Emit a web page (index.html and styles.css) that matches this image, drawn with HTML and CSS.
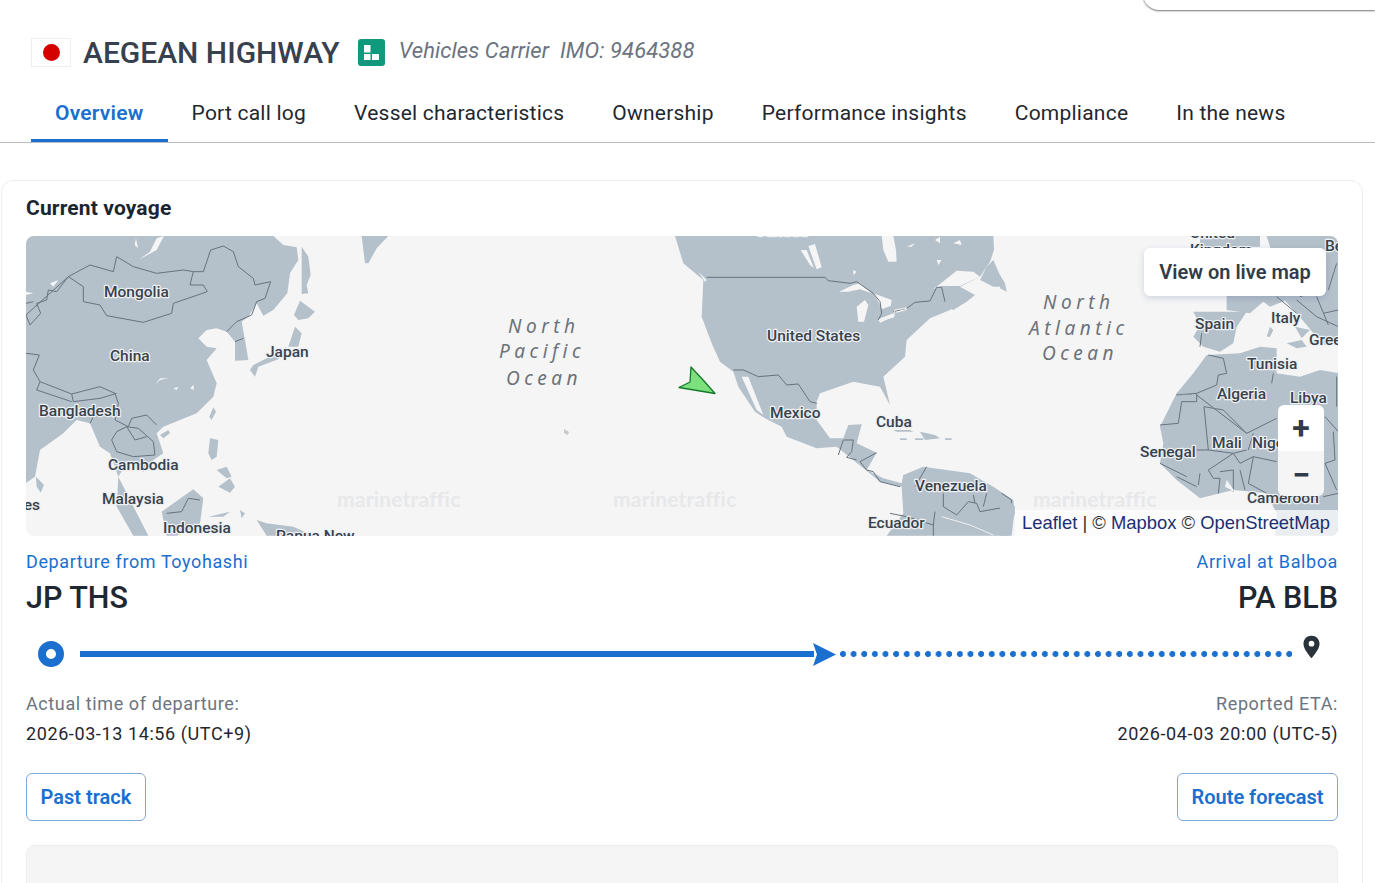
FILE: index.html
```html
<!DOCTYPE html>
<html lang="en">
<head>
<meta charset="utf-8">
<title>AEGEAN HIGHWAY</title>
<link rel="stylesheet" href="styles.css">
</head>
<body>
<div class="topmenu"></div>
<header class="head">
  <span class="flag"><span class="flag-dot"></span></span>
  <h1 class="name">AEGEAN HIGHWAY</h1>
  <svg class="type-icon" viewBox="0 0 27 27" width="27" height="27"><rect width="27" height="27" rx="3" fill="#0f9a7d"/><path fill="#fff" d="M6 6h6.500v7.500H6zM6 15h6.500v6H6zM14 15h7v6h-7z"/></svg>
  <span class="meta">Vehicles Carrier&nbsp; IMO: 9464388</span>
</header>
<nav class="tabs">
  <a class="tab active">Overview</a>
  <a class="tab">Port call log</a>
  <a class="tab">Vessel characteristics</a>
  <a class="tab">Ownership</a>
  <a class="tab">Performance insights</a>
  <a class="tab">Compliance</a>
  <a class="tab">In the news</a>
</nav>
<main class="card">
  <h2 class="card-title">Current voyage</h2>
  <div class="map">
    <svg class="map-svg" viewBox="26 236 1312 300" width="1312" height="300">
      <rect x="26" y="236" width="1312" height="300" fill="#f5f5f6"/>
      <g class="z2" transform="translate(0 170) scale(.33333)">
        <path class="land" d="M70 198H820L850 225L890 232L895 270L870 310L862 370L820 420L790 437L770 400L745 440L725 455L735 510L745 570L705 572L705 515L680 485L650 475L620 480L595 505L620 530L650 535L620 570L650 640L640 680L590 730L540 750L490 770L470 790L490 850L460 870L430 905L410 890L380 880L355 920L380 970L445 1097H400L350 1010L355 920L330 850L300 830L270 760L230 750L190 790L120 840L105 920L70 945Z"/>
        <path class="sea" d="M415 270L470 240L492 198L470 205L450 245ZM408 205L414 235L404 225ZM150 340L175 330L160 350ZM78 365L100 370L78 375ZM465 645L480 625L505 625L480 630ZM520 655L535 650L530 660ZM570 655L580 645L582 660Z"/>
        <path class="land" d="M1085 198H1165L1130 235L1105 280H1095ZM905 230L925 260L932 315L920 345L925 370L905 372L905 290ZM900 392L945 425L925 445L895 450L882 435ZM885 470L905 490L895 530L865 530ZM860 530L800 565L760 585L750 600L765 620L775 590L835 568ZM640 712L648 725L635 750L628 740ZM480 795L505 780L510 790L490 805ZM630 805L655 810L650 860L635 870L625 850ZM650 900L680 890L695 920L680 925ZM655 950L690 925L705 950L690 968ZM485 1025L580 958L610 985L600 1060L530 1097H500ZM625 1040L690 1025L670 1040ZM770 1050L800 1060L880 1070L940 1097H800ZM720 1020L735 1030L725 1045ZM108 920L132 945L122 968L110 950Z"/>
        <path class="border" d="M205 320L270 285L340 305L350 260L400 290L470 310L550 300L580 305L570 345L610 345L622 365L520 400L515 430L430 457L320 437L300 405L250 395L250 350L205 320ZM205 320L170 365L145 360L140 390L110 400L122 430L90 465L78 435ZM580 305L610 305L632 240L670 228L700 245L715 290L760 325L765 345L812 335L795 385L770 395L755 435L710 455L680 485M705 515L730 505M78 400L100 395M78 550L118 555L100 600L120 635L215 672L300 650L345 670L355 700L345 750L385 770L395 745L440 735L460 755L470 765M215 672L220 695L300 685L350 670M120 635L110 660L215 695M270 760L280 740L330 720M380 770L350 785L335 810L350 845L400 860L465 855L460 815L415 775ZM380 770L405 810L440 800M500 1030L545 1025L565 985L600 990"/>
      </g>
      <path class="isle" d="M564 429L569 432L568 435L564 433Z"/>
      <g class="z3" transform="translate(640 230) scale(.33333)">
        <path class="land" d="M105 18H1060L1062 60L1050 95L1020 140L960 170L1005 195L930 240L870 265L800 330L795 380L730 440L750 525L720 470L640 455L540 490L530 515L530 570L570 625L610 625L625 585L665 583L650 640L710 668L680 720L730 745L785 760L790 735L850 710L990 730L1060 770L1120 810L1125 850L1105 917H740L790 850L785 770L720 755L640 690L590 650L530 655L440 620L425 590L375 565L345 545L295 470L280 425L240 395L215 340L185 260L190 150L130 100Z"/>
        <path class="land" d="M1040 110L1060 90L1095 170L1060 170L1020 150Z"/>
        <path class="sea" d="M725 18H760L768 60L770 95H745L730 60ZM880 178L950 122L1000 125L1020 140L960 168L905 168ZM597 185L640 165L660 160L695 190L660 178L625 185ZM650 230L675 210L685 225L672 275H655ZM700 190L755 210L752 228L725 238L715 215ZM715 268L760 250L765 258L720 278ZM765 240L800 232V240L770 248ZM505 48L525 42L545 112L530 118ZM482 60L500 60L522 115L510 105ZM305 440L325 440L370 555L350 540ZM175 125L200 150L195 155ZM885 30L900 20L900 40ZM940 40L960 30L965 45ZM890 90L905 90L895 105ZM640 120L650 125L640 135ZM800 50L825 40L815 50Z"/>
        <path class="land" d="M840 605L885 615L900 625L855 630ZM780 625H800V630H780ZM825 625H850V630H825ZM915 625H935V630H915ZM760 600L810 600L820 605L770 605ZM930 235L960 210L1005 195L980 215L940 240Z"/>
        <path class="border" d="M200 142H555L565 152L630 160L650 155L700 190L720 215L725 250L715 270M760 245L800 235L825 217L870 213L890 172L905 172L915 215M280 420L310 420L355 440L415 435L440 465L475 462L510 515L530 520M640 630L610 630L595 675M640 630L635 665L620 682L650 690M710 668L660 695L680 720M680 720L700 725L720 755L780 770M860 710L825 770M910 790L910 830L950 855L985 815L1010 820L1020 845L1075 835L1110 835L1115 810L1085 790M1040 790L1030 830M1000 795L1005 820M885 845L880 885L880 917M750 850L800 860L880 885"/>
        <path class="river" d="M905 860L990 885L1060 915M715 272L760 262L765 240L800 235"/>
      </g>
      <g class="z4" transform="translate(1000 230) scale(.33333)">
        <path class="land" d="M0 135L15 160L20 185L0 175ZM0 790L45 830L35 917H0Z"/>
        <path class="land" d="M620 375L580 430L530 490L505 540L480 590L490 640L480 700L530 750L600 805L700 780L800 790L830 850L825 917H1020V430L960 420L900 440L830 430L830 355L780 350L720 370Z"/>
        <path class="land" d="M580 245H740L710 290L700 340L660 365L610 350L580 320L600 285Z"/>
        <path class="land" d="M680 180H860L855 212L810 230L790 215L750 250L680 240ZM800 18H1020V330L975 345L945 315L890 250L855 212L850 180ZM810 290L820 300L810 320H800ZM860 340L905 330L920 350L890 355ZM885 290L930 300L905 325ZM600 18H780V50H600Z"/>
        <path class="border" d="M625 375L670 385L680 430L655 435L650 465L590 490L530 495M590 490L590 515H545L535 580L480 585M590 495L740 610L830 565M612 530L625 660H590M612 530L670 540L740 610M760 610L745 660M820 430L815 460M625 660L700 670L740 660M700 670L720 700L760 680L830 695M700 670L625 720L640 745L660 745L655 790M660 725L700 720L700 785M720 720L735 780M600 730L595 765M480 700L560 740M530 740L590 770M760 680L745 760L800 790M975 560L1015 605M1000 605L1005 690L975 700L1010 780M970 800L1015 790M605 310L600 350M830 200L890 250M890 210L950 260L1015 290M950 200L985 285M970 250L1015 240M1010 100L985 180M900 200L960 180M1010 440V530"/>
        <path class="sea" d="M680 750L705 785L675 770Z"/>
        <path class="dash" d="M528 493H580"/>
      </g>
      <path class="ship" d="M691 367L704 381L715 393.500L679 387.500L690 382Z"/>
      <g class="water">
        <text x="508" y="333">North</text><text x="499" y="358">Pacific</text><text x="506" y="385">Ocean</text>
        <text x="1043" y="309">North</text><text x="1029" y="335">Atlantic</text><text x="1042" y="360">Ocean</text>
      </g>
      <g class="marks"><text x="337" y="507">marinetraffic</text><text x="613" y="507">marinetraffic</text><text x="1033" y="507">marinetraffic</text></g>
      <g class="labels">
        <text x="104" y="297">Mongolia</text><text x="110" y="361">China</text><text x="266" y="357">Japan</text><text x="39" y="416">Bangladesh</text><text x="108" y="470">Cambodia</text><text x="102" y="504">Malaysia</text><text x="163" y="533">Indonesia</text><text x="276" y="541">Papua New</text><text class="end" x="40" y="510">Maldives</text>
        <text x="767" y="341">United States</text><text x="770" y="418">Mexico</text><text x="876" y="427">Cuba</text><text x="915" y="491">Venezuela</text><text x="868" y="528">Ecuador</text><text x="755" y="236">Canada</text>
        <text x="1195" y="329">Spain</text><text x="1271" y="323">Italy</text><text x="1309" y="345">Greece</text><text x="1247" y="369">Tunisia</text><text x="1217" y="399">Algeria</text><text x="1290" y="403">Libya</text><text x="1212" y="448">Mali</text><text x="1252" y="448">Niger</text><text x="1140" y="457">Senegal</text><text x="1247" y="503">Cameroon</text><text x="1325" y="251">Belarus</text><text x="1190" y="238">United</text><text x="1190" y="255">Kingdom</text>
      </g>
    </svg>
    <a class="live-btn">View on live map</a>
    <div class="zoom-box"><span class="zoom-in">+</span><span class="zoom-out">−</span></div>
    <div class="attrib"><a>Leaflet</a> | © <a>Mapbox</a> © <a>OpenStreetMap</a></div>
  </div>
  <div class="ports">
    <div><div class="port-label">Departure from Toyohashi</div><div class="port-code">JP THS</div></div>
    <div class="right"><div class="port-label">Arrival at Balboa</div><div class="port-code">PA BLB</div></div>
  </div>
  <div class="timeline">
    <span class="origin"></span>
    <span class="solid"></span>
    <svg class="arrow" viewBox="0 0 23 23" width="23" height="23"><path d="M0 0L23 11.500L0 23L4 11.500Z"/></svg>
    <span class="dots"></span>
    <svg class="pin" viewBox="0 0 18 24" width="17" height="24"><path fill-rule="evenodd" d="M9 0C4 0 .5 3.700.5 8.500C.5 14 6 20 9 24C12 20 17.500 14 17.500 8.500C17.500 3.700 14 0 9 0ZM9 5.500A3 3 0 1 1 9 11.500A3 3 0 1 1 9 5.500Z"/></svg>
  </div>
  <div class="times">
    <div><div class="time-label">Actual time of departure:</div><div class="time-val">2026-03-13 14:56 (UTC+9)</div></div>
    <div class="right"><div class="time-label">Reported ETA:</div><div class="time-val">2026-04-03 20:00 (UTC-5)</div></div>
  </div>
  <div class="actions"><a class="btn">Past track</a><a class="btn">Route forecast</a></div>
  <div class="panel"></div>
</main>
</body>
</html>
```
FILE: styles.css
```css
* { box-sizing: border-box; }
html, body { height: 883px; overflow: hidden; }
body { margin: 0; background: #fff; font-family: Roboto, "Liberation Sans", sans-serif; color: #1f2730; position: relative; }
.topmenu { position: absolute; right: 0; top: -30px; width: 232px; height: 40px; background: #fff; border-bottom-left-radius: 16px; box-shadow: 0 1px 2px rgba(0,0,0,.55); }
.head { display: flex; align-items: center; height: 38px; padding: 33px 0 0 31px; box-sizing: content-box; }
.flag { width: 40px; height: 29px; border: 1px solid #eee; display: flex; align-items: center; justify-content: center; margin-right: 12px; }
.flag-dot { width: 17px; height: 17px; border-radius: 50%; background: #d50000; }
.name { margin: 0 18px 0 0; font-size: 30px; font-weight: 500; color: #36404e; line-height: 38px; position: relative; top: 1px; }
.type-icon { margin-right: 14px; }
.meta { font-style: italic; font-size: 22px; letter-spacing: .07px; color: #6b7480; position: relative; top: -2px; }
.tabs { display: flex; height: 72px; padding-left: 31px; border-bottom: 1px solid #b9bcc0; }
.tab { display: flex; align-items: center; padding: 12px 24px 0; font-size: 21px; height: 71px; color: #1f2730; letter-spacing: .23px; }
.tab.active { color: #1a6fcf; font-weight: 600; border-bottom: 3px solid #1a6fcf; padding-top: 15px; }
.card { margin: 37px 12px 0 1px; height: 720px; overflow: hidden; border: 1px solid #ededed; border-radius: 12px; padding: 15px 24px 0; }
.card-title { margin: 0 0 15px; font-size: 21px; line-height: 25px; font-weight: 700; color: #1b2530; letter-spacing: .15px; }
.map { position: relative; width: 1312px; height: 300px; border-radius: 8px; overflow: hidden; }
.map-svg { display: block; }
.land { fill: #b4c0ca; }
.sea { fill: #f5f5f6; }
.isle { fill: #c4c9ce; }
.border { fill: none; stroke: #66727d; stroke-width: 3; stroke-linejoin: round; }
.river { fill: none; stroke: #eef0f2; stroke-width: 3; }
.dash { fill: none; stroke: #8b96a0; stroke-width: 3; stroke-dasharray: 12 6; }
.ship { fill: #7ce07c; stroke: #137a2c; stroke-width: 1.300; stroke-linejoin: round; }
.water text { font-family: "Noto Sans", Roboto, sans-serif; font-style: italic; font-size: 19px; letter-spacing: 4.500px; fill: #6b7279; }
.marks text { font-family: Lato, sans-serif; font-weight: 700; font-size: 21px; fill: #e7e8e9; letter-spacing: .2px; }
.labels text { font-family: Roboto, sans-serif; font-size: 15.500px; font-weight: 500; fill: #39424c; stroke: #eef1f4; stroke-width: 2.500; paint-order: stroke; stroke-linejoin: round; }
.labels .end { text-anchor: end; }
.live-btn { position: absolute; left: 1118px; top: 12px; width: 182px; height: 48px; display: flex; align-items: center; justify-content: center; background: #fff; border-radius: 6px; font-size: 20px; font-weight: 600; color: #323c48; box-shadow: 0 2px 6px rgba(40,60,120,.18); }
.zoom-box { position: absolute; left: 1252px; top: 169px; width: 46px; height: 91px; display: flex; flex-direction: column; border-radius: 6px; overflow: hidden; }
.zoom-in, .zoom-out { height: 45.500px; display: flex; align-items: center; justify-content: center; font-size: 32px; font-weight: 700; color: #323c48; line-height: 1; }
.zoom-in { background: #fff; }
.zoom-out { background: #f5f5f6; padding-top: 4px; }
.attrib { position: absolute; right: 0; bottom: 0; height: 26px; line-height: 26px; padding: 0 8px 0 7px; white-space: pre; background: rgba(255,255,255,.72); font-family: "Liberation Sans", sans-serif; font-size: 18.400px; color: #333; }
.attrib a { color: #1c2f73; }
.ports, .times, .actions { display: flex; justify-content: space-between; }
.ports { margin-top: 13px; }
.right { text-align: right; }
.port-label { font-size: 18px; line-height: 26px; color: #1a6fcf; letter-spacing: .6px; }
.port-code { font-size: 30.500px; font-weight: 500; line-height: 46px; color: #1f2730; }
.timeline { display: flex; align-items: center; height: 38px; padding-left: 12px; margin-top: 14px; }
.origin { width: 26px; height: 26px; border-radius: 50%; border: 8px solid #1a6fcf; background: #fff; margin-right: 16px; flex: none; }
.solid { width: 734px; height: 6px; background: #1a6fcf; flex: none; }
.arrow { fill: #1a6fcf; margin-left: -1px; flex: none; }
.dots { width: 452px; height: 6px; margin-left: 4px; flex: none; background: radial-gradient(circle at 3px 3px, #1a6fcf 2.700px, transparent 3.200px) 0 0 / 10.630px 6px repeat-x; }
.pin { fill: #2a323b; margin: -14px 0 0 11px; flex: none; }
.times { margin-top: 16px; }
.time-label { font-size: 18px; line-height: 30px; color: #6b7480; letter-spacing: .6px; }
.time-val { font-size: 18px; line-height: 30px; color: #1f2730; letter-spacing: .6px; }
.actions { margin-top: 24px; }
.btn { display: flex; align-items: center; height: 48px; padding: 0 13.500px; border: 1px solid #7ea9d9; border-radius: 6px; color: #1a6fcf; font-size: 20px; font-weight: 600; }
.panel { margin-top: 24px; height: 120px; background: #f5f5f6; border: 1px solid #eee; border-radius: 8px; }
```
